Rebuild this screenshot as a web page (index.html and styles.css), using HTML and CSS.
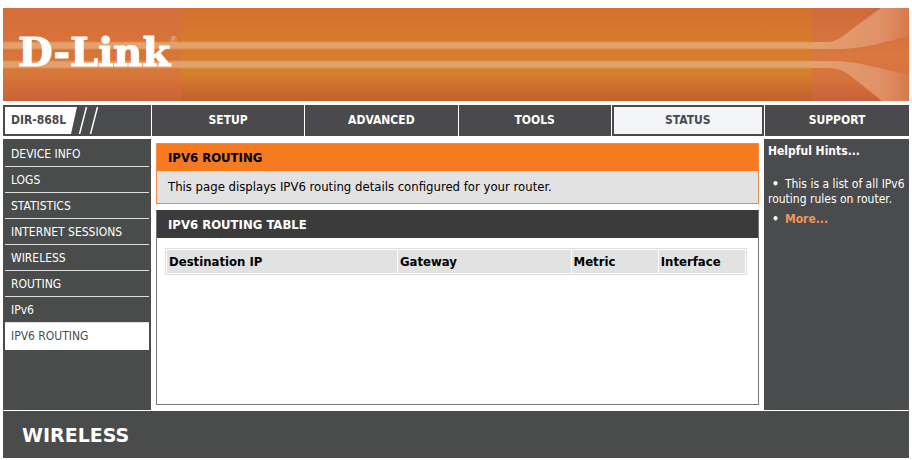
FILE: index.html
```html
<!DOCTYPE html>
<html lang="en">
<head>
<meta charset="utf-8">
<title>D-Link DIR-868L | Status | IPv6 Routing</title>
<link rel="stylesheet" href="styles.css">
</head>
<body>
<header class="banner">
  <a class="logo" href="#">D-Link<sup class="reg">®</sup></a>
  <svg class="flare" viewBox="0 0 97 93" aria-hidden="true">
    <defs>
      <linearGradient id="base" x1="0" y1="0" x2="0" y2="1">
        <stop offset="0" stop-color="#cf6a3a"/>
        <stop offset=".5" stop-color="#d97840"/>
        <stop offset=".75" stop-color="#d6743c"/>
        <stop offset="1" stop-color="#c8603a"/>
      </linearGradient>
      <linearGradient id="up" x1="0" y1="0" x2="1" y2="0">
        <stop offset="0" stop-color="#e3a16c"/>
        <stop offset=".7" stop-color="#e09168"/>
        <stop offset="1" stop-color="#d8794c"/>
      </linearGradient>
    </defs>
    <path fill="url(#base)" d="M0 0H97V93H0Z"/>
    <path fill="url(#up)" d="M0 34H14C27 34 33 26 40 21L69 0H97V28C74 33 56 41 22 41H0Z"/>
    <path fill="url(#up)" d="M0 53H22C48 53 72 63 97 66V93H70L45 73C37 66 30 60 14 60H0Z"/>
  </svg>
</header>

<nav class="tabs" aria-label="Main">
  <div class="model">
    <span class="model-name">DIR-868L</span>
    <svg class="slashes" viewBox="0 0 30 27" aria-hidden="true">
      <path fill="#fff" d="M0 0H8L2 27H0Z"/>
      <path stroke="#fff" stroke-width="1.5" d="M17.500 0L10.500 27M28.500 0L21.500 27"/>
    </svg>
  </div>
  <a class="tab" href="#">SETUP</a>
  <a class="tab" href="#">ADVANCED</a>
  <a class="tab" href="#">TOOLS</a>
  <a class="tab tab-on" href="#" aria-current="page">STATUS</a>
  <a class="tab" href="#">SUPPORT</a>
</nav>

<div class="page">
  <nav class="side" aria-label="Status">
    <a class="item" href="#">DEVICE INFO</a>
    <a class="item" href="#">LOGS</a>
    <a class="item" href="#">STATISTICS</a>
    <a class="item" href="#">INTERNET SESSIONS</a>
    <a class="item" href="#">WIRELESS</a>
    <a class="item" href="#">ROUTING</a>
    <a class="item" href="#">IPv6</a>
    <a class="item item-on" href="#" aria-current="page">IPV6 ROUTING</a>
  </nav>

  <main class="main">
    <section class="intro">
      <h1 class="title">IPV6 ROUTING</h1>
      <p class="text">This page displays IPV6 routing details configured for your router.</p>
    </section>
    <section class="box">
      <h2 class="title title-dark">IPV6 ROUTING TABLE</h2>
      <table class="routes">
        <thead>
          <tr>
            <th class="dest" scope="col">Destination IP</th>
            <th class="gate" scope="col">Gateway</th>
            <th class="metric" scope="col">Metric</th>
            <th scope="col">Interface</th>
          </tr>
        </thead>
      </table>
    </section>
  </main>

  <aside class="hints">
    <h2 class="hints-title">Helpful Hints...</h2>
    <ul class="hints-list">
      <li>This is a list of all IPv6 routing rules on router.</li>
      <li><a class="more" href="#">More...</a></li>
    </ul>
  </aside>
</div>

<footer class="foot">WIRELESS</footer>
</body>
</html>
```
FILE: styles.css
```css
* {
  box-sizing: border-box;
}

body {
  display: flex;
  flex-direction: column;
  min-height: 100vh;
  margin: 0;
  padding: 8px 3px 2px;
  background: #fff;
  font-family: "DejaVu Sans Condensed", "DejaVu Sans", sans-serif;
  font-size: 12px;
  line-height: 15px;
}

a {
  color: inherit;
  text-decoration: none;
}

h1, h2, p, ul {
  margin: 0;
  padding: 0;
}

/* Banner */
.banner {
  display: flex;
  justify-content: space-between;
  height: 93px;
  margin-bottom: 4px;
  background:
    linear-gradient(transparent 33px, #e3a16c 35px, #e3a16c 40px, transparent 42px),
    linear-gradient(transparent 52px, #e3a16c 54px, #e3a16c 59px, transparent 61px),
    linear-gradient(90deg, #d9694c66 178px, transparent 178px),
    linear-gradient(#d3702e, #d87c2c 45%, #d6822c 70%, #cb6c2e 87%, #c1602c);
}

.logo {
  display: flex;
  align-items: flex-start;
  padding: 24px 0 0 15px;
  color: #fff;
  font: bold 40px/40px "DejaVu Serif", serif;
  -webkit-text-stroke: 1px #fff;
}

.reg {
  color: #f0c4a4;
  font: 9px/16px "Liberation Sans", sans-serif;
  -webkit-text-stroke: 0;
}

.flare {
  width: 97px;
  height: 93px;
}

/* Tabs */
.tabs {
  display: grid;
  grid-template-columns: 148px repeat(4, 1fr) 144px;
  gap: 1px;
  margin-bottom: 3px;
  font-weight: bold;
}

.model {
  display: flex;
  padding: 2px;
  background: #4a4b4c;
}

.model-name {
  padding: 6px 3px 6px 6px;
  background: #fff;
  color: #4a4b4c;
}

.slashes {
  width: 30px;
  height: 27px;
}

.tab {
  padding: 8px;
  background: #4a4a4c;
  color: #fff;
  text-align: center;
}

.tab-on {
  padding: 6px;
  border: 2px solid #4a4a4c;
  background: #f3f5f7;
  color: #4a4a4c;
}

/* Body */
.page {
  display: grid;
  grid-template-columns: 148px 1fr 145px;
  gap: 5px;
  flex: 1;
  margin-bottom: 1px;
}

.side {
  padding: 2px 2px 0;
  background: #4a4c4c;
  color: #fff;
}

.item {
  display: block;
  padding: 6px 6px 4px;
  border-bottom: 1px solid #ddd;
}

.item-on {
  padding-bottom: 5px;
  border-color: #fff;
  background: #fff;
  color: #4a4c4c;
}

.main {
  display: flex;
  flex-direction: column;
  gap: 6px;
  padding: 4px 0 5px;
}

.intro {
  border: 1px solid #f08a44;
  background: #e2e2e2;
}

.title {
  padding: 6px 11px;
  background: #f67a20;
  color: #000;
  font-size: 13px;
  line-height: 15px;
}

.title-dark {
  background: #3b3b3b;
  color: #fff;
}

.text {
  padding: 8px 11px 9px;
  font-size: 13px;
}

.box {
  flex: 1;
  border: 1px solid #777;
  border-top-color: #3b3b3b;
}

.routes {
  width: calc(100% - 19px);
  margin: 10px 8px;
  border: 1px solid #ddd;
  border-spacing: 1px;
  table-layout: fixed;
  font-size: 13px;
}

.routes th {
  padding: 4px 2px;
  background: #e2e2e2;
  text-align: left;
}

.dest {
  width: 40%;
}

.gate {
  width: 30%;
}

.metric {
  width: 15%;
}

.hints {
  padding: 5px 4px;
  background: #4a4b4c;
  color: #fff;
}

.hints-title {
  margin-bottom: 18px;
  font-size: 12px;
}

.hints-list li {
  margin-bottom: 5px;
  list-style: none;
}

.hints-list li::before {
  content: "•";
  margin: 0 6px 0 4px;
  font-weight: bold;
}

.more {
  color: #f0965a;
  font-weight: bold;
}

/* Footer */
.foot {
  padding: 14px 19px 13px;
  background: #4a4c4c;
  color: #fff;
  font: bold 19px/20px "DejaVu Sans", sans-serif;
}
```
